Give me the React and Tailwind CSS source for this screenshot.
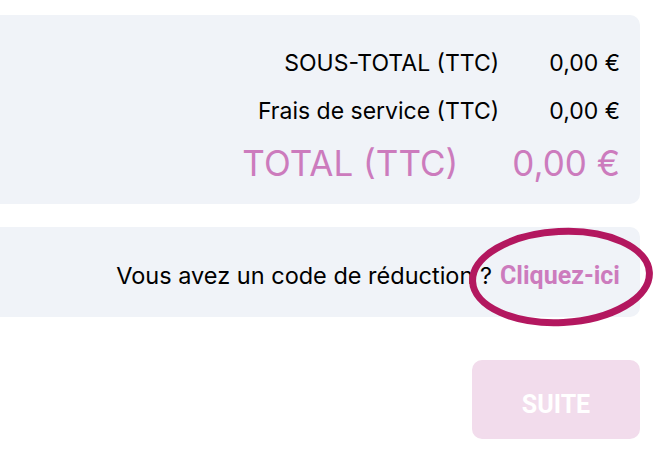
import React from "react";

const rows = [
  { label: "SOUS-TOTAL (TTC)", value: "0,00 €" },
  { label: "Frais de service (TTC)", value: "0,00 €" },
];

export default function App() {
  return (
    <div className="relative w-[664px] h-[460px] bg-white font-['Inter',sans-serif] text-black">
      <div className="pt-[15px] w-[640px]">
        {/* Totals */}
        <div className="h-[189px] bg-[#f0f3f8] rounded-r-[10px] pt-[24px] pr-5 flex flex-col items-end">
          {rows.map((row) => (
            <div key={row.label} className="h-12 flex items-center gap-[50px] text-[23px]">
              <span>{row.label}</span>
              <span>{row.value}</span>
            </div>
          ))}
          <div className="h-14 flex items-center gap-[54px] text-[35px] text-[#cc7bbd]">
            <span>TOTAL (TTC)</span>
            <span>0,00 €</span>
          </div>
        </div>

        {/* Discount code */}
        <div className="mt-[23px] h-[90px] bg-[#f0f3f8] rounded-r-[10px] pr-5 pt-[8px] flex items-center justify-end text-[23.5px]">
          <span>Vous avez un code de réduction ?</span>
          <span className="ml-2 font-['Roboto',sans-serif] font-bold text-[25px] text-[#cc7bbd]">Cliquez-ici</span>
        </div>

        <div className="mt-[43px] flex justify-end">
          <button className="w-[168px] h-[79px] pt-[10px] rounded-[10px] bg-[#f2dcec] text-white font-['Roboto',sans-serif] font-bold text-[25px]">
            SUITE
          </button>
        </div>
      </div>

      {/* highlight circle */}
      <svg className="absolute left-[466px] top-[225px]" width="190" height="104" viewBox="0 0 190 104">
        <ellipse cx="95" cy="52" rx="88.5" ry="45.5" fill="none" stroke="#b3175f" strokeWidth="7" transform="rotate(-3 95 52)" />
      </svg>
    </div>
  );
}
